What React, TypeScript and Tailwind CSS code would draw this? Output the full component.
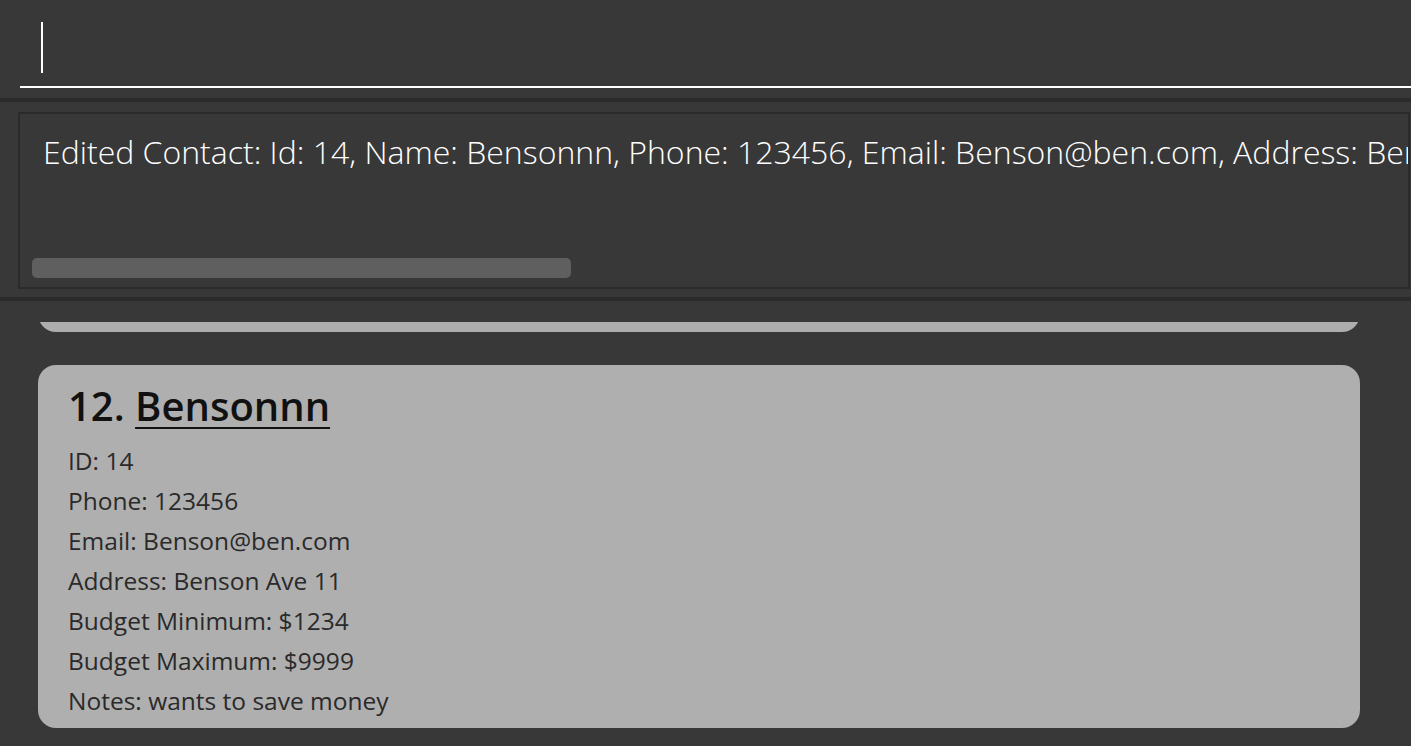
import React from 'react'

const details = [
  'ID: 14',
  'Phone: 123456',
  'Email: Benson@ben.com',
  'Address: Benson Ave 11',
  'Budget Minimum: $1234',
  'Budget Maximum: $9999',
  'Notes: wants to save money',
]

const App = () => {
  return (
    <div
      className="h-[746px] w-[1411px] overflow-hidden bg-[#383838] flex flex-col"
      style={{ fontFamily: '"Open Sans", "Noto Sans", sans-serif' }}
    >
      {/* command box */}
      <div className="h-[98px] shrink-0 pl-[20px] pt-[22px]">
        <div className="h-[66px] border-b-2 border-white pl-[21px]">
          <div className="h-[51px] w-[2px] bg-white" />
        </div>
      </div>
      <div className="h-[4px] shrink-0 bg-[#2b2b2b]" />

      {/* result display */}
      <div className="h-[195px] shrink-0 pl-[18px] pr-[1px] pt-[10px]">
        <div className="relative h-[177px] overflow-hidden border-2 border-[#2b2b2b]">
          <div className="whitespace-nowrap pl-[23px] pt-[14px] text-[32px] font-light leading-[48px] text-white">
            Edited Contact: Id: 14, Name: Bensonnn, Phone: 123456, Email: Benson@ben.com, Address: Benson Ave 11, Budget Minimum: $1234, Budget Maximum: $9999, Notes: wants to save money
          </div>
          <div className="absolute left-[12px] top-[144px] h-[20px] w-[539px] rounded-[5px] bg-[#5f5f5f]" />
        </div>
      </div>
      <div className="h-[4px] shrink-0 bg-[#2b2b2b]" />

      {/* person list */}
      <div className="flex flex-col pl-[38px] pr-[51px] pt-[21px]">
        <div className="h-[10px] overflow-hidden">
          <div className="-mt-[30px] h-[40px] rounded-[18px] bg-[#adadad]" />
        </div>
        <div className="mt-[33px] h-[363px] rounded-[18px] bg-[#afafaf] pl-[30px] pt-[13px]">
          <div className="text-[40px] font-semibold leading-[56px] text-[#111111]">
            12. <span className="underline decoration-2 underline-offset-[6px]">Bensonnn</span>
          </div>
          <div className="mt-[7px] flex flex-col">
            {details.map((d) => (
              <div key={d} className="text-[24.5px] leading-[40px] text-[#2a2a2a]">
                {d}
              </div>
            ))}
          </div>
        </div>
      </div>
    </div>
  )
}

export default App
